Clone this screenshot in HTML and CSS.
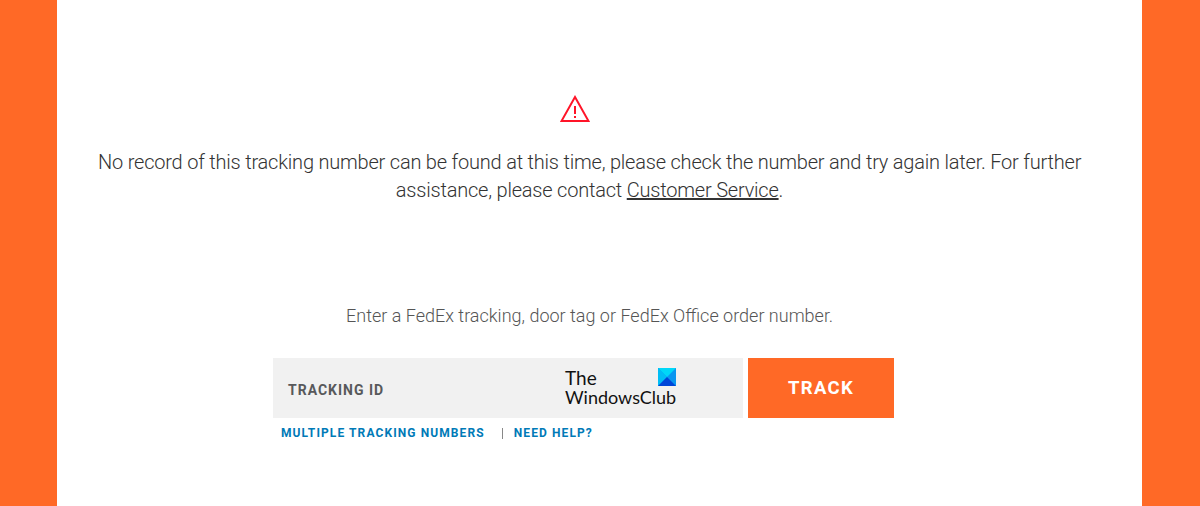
FILE: index.html
```html
<!DOCTYPE html>
<html lang="en">
<head>
    <meta charset="UTF-8">
    <meta name="viewport" content="width=device-width, initial-scale=1.0">
    <title>FedEx Tracking</title>
    <link rel="stylesheet" href="styles.css">
</head>
<body>
    <main class="container">
        <div class="error">
            <svg class="error-icon" width="30" height="28" viewBox="0 0 30 28">
                <path d="M15 2 L28.5 26 H1.5 Z" fill="none" stroke="#ff1428" stroke-width="2"/>
                <path d="M15 11 V19 M15 21 V23" stroke="#ff1428" stroke-width="2"/>
            </svg>
            <p class="error-text">No record of this tracking number can be found at this time, please check the number and try again later. For further<br>assistance, please contact <a href="#">Customer Service</a>.</p>
        </div>

        <p class="hint">Enter a FedEx tracking, door tag or FedEx Office order number.</p>

        <form class="track-form">
            <div class="track-field">
                <span class="track-label">TRACKING ID</span>
                <div class="logo">
                    <div class="logo-top">
                        <span>The</span>
                        <svg width="18" height="18" viewBox="0 0 18 18">
                            <rect width="18" height="18" fill="#0a96f0"/>
                            <path d="M0 0 H18 L9 9 Z" fill="#00d8f8"/>
                            <path d="M0 0 L9 9 L0 18 Z" fill="#00bdf5"/>
                            <path d="M0 18 L9 9 L18 18 Z" fill="#0046d8"/>
                        </svg>
                    </div>
                    <div class="logo-name">WindowsClub</div>
                </div>
            </div>
            <button type="button" class="track-btn">TRACK</button>
        </form>

        <div class="links">
            <a href="#">MULTIPLE TRACKING NUMBERS</a>
            <span class="divider"></span>
            <a href="#">NEED HELP?</a>
        </div>
    </main>
</body>
</html>
```
FILE: styles.css
```css
* {
    box-sizing: border-box;
}
body {
    margin: 0;
    padding: 0 58px 0 57px;
    background: #ff6926;
    font-family: Roboto, sans-serif;
}
.container {
    height: 506px;
    padding-top: 95px;
    background: #fff;
}
.error-icon {
    display: block;
    margin-left: 503px;
}
.error-text {
    margin: 25px 0 0;
    padding: 0 41px;
    width: 1065px;
    color: #333;
    font-size: 20px;
    font-weight: 300;
    line-height: 28px;
    letter-spacing: -0.205px;
    text-align: center;
    white-space: nowrap;
}
.error-text a {
    color: #333;
    text-decoration-thickness: 2px;
}
.hint {
    margin: 100px 0 0 289px;
    color: #555;
    font-size: 18px;
    font-weight: 300;
    line-height: 24px;
    white-space: nowrap;
}
.track-form {
    display: flex;
    gap: 5px;
    margin: 30px 0 0 216px;
}
.track-field {
    display: flex;
    justify-content: space-between;
    width: 470px;
    height: 60px;
    padding: 0 67px 0 15px;
    background: #f1f1f1;
}
.track-label {
    padding-top: 24px;
    color: #58595b;
    font-size: 14px;
    font-weight: 700;
    line-height: 17px;
    letter-spacing: 1px;
}
.logo {
    width: 111px;
    padding-top: 10px;
    color: #111;
    font-family: Lato, sans-serif;
    font-size: 18px;
    line-height: 19px;
}
.logo-top {
    display: flex;
    justify-content: space-between;
    height: 20px;
    font-size: 19px;
}
.track-btn {
    width: 146px;
    height: 60px;
    padding: 0 0 1px;
    border: none;
    background: #ff6926;
    color: #fff;
    font-family: Roboto, sans-serif;
    font-size: 18.5px;
    font-weight: 700;
    letter-spacing: 1.3px;
}
.links {
    display: flex;
    align-items: center;
    margin: 7px 0 0 224px;
    font-size: 12px;
    font-weight: 700;
    line-height: 16px;
    letter-spacing: 1.1px;
}
.links a {
    color: #007ab7;
    text-decoration: none;
}
.divider {
    width: 1px;
    height: 11px;
    margin: 0 11px 0 17px;
    background: #888;
}
```
